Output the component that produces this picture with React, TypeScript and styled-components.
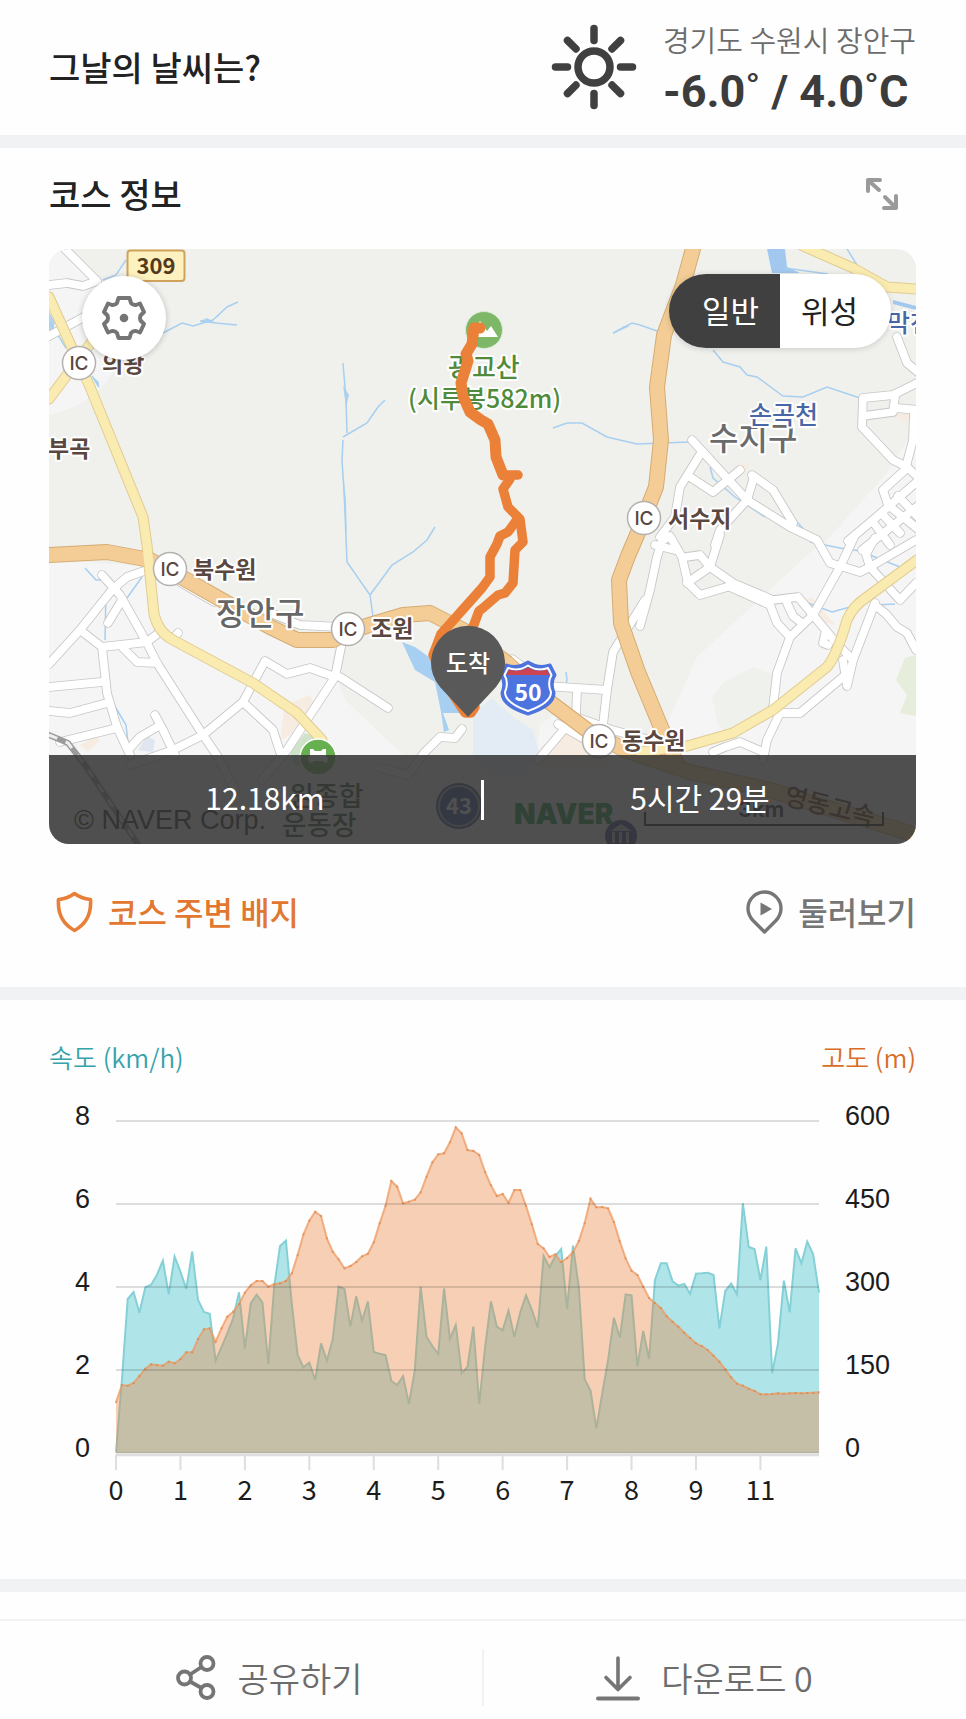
import React, { useState } from 'react';
import styled, { createGlobalStyle } from 'styled-components';

const KR = '"Noto Sans CJK KR", "Noto Sans", sans-serif';

const GlobalStyle = createGlobalStyle`
  *, *::before, *::after { box-sizing: border-box; }
  body { margin: 0; background: #fefefe; color: #222; font-family: ${KR}; }
  h1, h2, p, ul { margin: 0; padding: 0; }
  button { border: 0; background: none; padding: 0; font: inherit; color: inherit; cursor: pointer; }
`;

const Page = styled.main`
  display: flex;
  flex-direction: column;
`;

const Band = styled.div`
  height: 13px;
  background: #f1f2f4;
`;

const Title = styled.h2`
  font-size: 34px;
  line-height: 50px;
  font-weight: 500;
`;

/* weather */
const WeatherBar = styled.header`
  display: flex;
  align-items: center;
  justify-content: space-between;
  padding: 14px 50px 15px 49px;
`;
const Weather = styled.div`
  display: flex;
  align-items: center;
  gap: 26px;
`;
const Region = styled.p`
  font-size: 29px;
  line-height: 50px;
  font-weight: 350;
  color: #6c6c6c;
`;
const Temperature = styled.p`
  font-family: Roboto, sans-serif;
  font-size: 45px;
  line-height: 56px;
  font-weight: 700;
  color: #3c3c3c;
  white-space: nowrap;
`;

/* course */
const Course = styled.section`
  padding: 0 50px 0 49px;
`;
const CourseHead = styled.div`
  display: flex;
  align-items: center;
  justify-content: space-between;
  padding: 21px 17px 30px 0;
`;
const IconButton = styled.button`
  display: flex;
`;
const MapCard = styled.div`
  position: relative;
  height: 595px;
  border-radius: 20px;
  overflow: hidden;
  background: #f0f1ed;
`;
const MapDrawing = styled.svg`
  display: block;
  width: 100%;
  height: 100%;
`;
const SettingsButton = styled.button`
  position: absolute;
  left: 33px;
  top: 27px;
  display: grid;
  place-items: center;
  width: 84px;
  height: 84px;
  border-radius: 50%;
  background: #fff;
  box-shadow: 0 1px 6px rgba(0, 0, 0, 0.22);
`;
const LayerToggle = styled.div`
  position: absolute;
  right: 25px;
  top: 25px;
  display: flex;
  height: 74px;
  border-radius: 37px;
  overflow: hidden;
  box-shadow: 0 1px 6px rgba(0, 0, 0, 0.16);
`;
const LayerButton = styled.button<{ $on: boolean; $first?: boolean }>`
  width: 111px;
  padding: ${(p) => (p.$first ? '0 0 2px 12px' : '0 12px 2px 0')};
  font-size: 31px;
  line-height: 44px;
  font-weight: 400;
  color: ${(p) => (p.$on ? '#fff' : '#222')};
  background: ${(p) => (p.$on ? '#404040' : '#fff')};
`;
const Summary = styled.div`
  position: absolute;
  inset: auto 0 0;
  display: flex;
  align-items: center;
  height: 89px;
  background: rgba(54, 54, 54, 0.87);
  color: #fff;
  font-size: 30px;
  line-height: 44px;
`;
const SummaryItem = styled.span`
  flex: 1;
  padding-bottom: 5px;
  text-align: center;
`;
const SummaryRule = styled.span`
  width: 3px;
  height: 40px;
  background: #fff;
`;
const CourseLinks = styled.div`
  display: flex;
  justify-content: space-between;
  align-items: center;
  padding: 45px 0 53px;
`;
const CourseLink = styled.a<{ $accent?: boolean }>`
  display: flex;
  align-items: center;
  gap: 15px;
  padding-left: ${(p) => (p.$accent ? '7px' : '0')};
  font-size: 32px;
  line-height: 45px;
  font-weight: 500;
  text-decoration: none;
  color: ${(p) => (p.$accent ? '#e2772f' : '#767676')};
`;

/* chart */
const ChartSection = styled.section`
  padding: 38px 50px 75px 49px;
`;
const Legend = styled.div`
  display: flex;
  justify-content: space-between;
  margin-bottom: 24px;
`;
const LegendLabel = styled.span<{ $tone: string }>`
  font-size: 26px;
  line-height: 38px;
  font-weight: 350;
  color: ${(p) => p.$tone};
`;
const ChartGrid = styled.div`
  display: grid;
  grid-template-columns: 41px 1fr 71px;
  column-gap: 26px;
`;
const Axis = styled.ul<{ $right?: boolean }>`
  display: flex;
  flex-direction: column;
  justify-content: space-between;
  height: 364px;
  list-style: none;
  text-align: ${(p) => (p.$right ? 'left' : 'right')};
  font-family: "Liberation Sans", sans-serif;
  font-size: 27px;
  line-height: 32px;
  color: #1c1c1c;
`;
const PlotColumn = styled.div`
  min-width: 0;
  padding-top: 20px;
`;
const Plot = styled.svg`
  display: block;
  width: 100%;
  height: 350px;
  overflow: visible;
`;
const Distances = styled.ul`
  display: flex;
  width: 100%;
  margin-left: calc(-100% * 11 / 240);
  padding-top: 4px;
  list-style: none;
`;
const Distance = styled.li`
  flex: 0 0 calc(100% * 11 / 120);
  text-align: center;
  font-size: 27px;
  line-height: 30px;
  color: #1c1c1c;
`;

/* footer */
const Footer = styled.footer`
  display: flex;
  margin-top: 27px;
  padding: 28px 49px 14px;
  border-top: 2px solid #f1f2f4;
`;
const Action = styled.button`
  flex: 1;
  display: flex;
  align-items: center;
  justify-content: center;
  gap: 21px;
  height: 57px;
  padding-left: 8px;
  font-size: 34px;
  line-height: 48px;
  font-weight: 350;
  color: #6c6c6c;
  & + & { border-left: 2px solid #f1f2f4; }
`;

const SunIcon = () => (
  <svg width="86" height="86" viewBox="-43 -43 86 86" fill="none" stroke="#404040" strokeWidth="7.5" strokeLinecap="round" aria-hidden="true">
    <circle r="16" />
    {[0, 45, 90, 135, 180, 225, 270, 315].map((a) => (
      <path key={a} d={a % 90 ? 'M0-25.500V-37.500' : 'M0-26.500V-38.500'} transform={`rotate(${a})`} />
    ))}
  </svg>
);
const ExpandIcon = () => (
  <svg width="34" height="34" viewBox="0 0 34 34" fill="none" stroke="#9a9a9a" strokeWidth="4" strokeLinecap="round" strokeLinejoin="round" aria-hidden="true">
    <path d="M3 14V3H15M4 4L14 13M20 20L30 30M31 19V31H19" />
  </svg>
);
const GearIcon = () => (
  <svg width="46" height="46" viewBox="-23 -23 46 46" fill="none" stroke="#757575" strokeWidth="4" strokeLinejoin="round" aria-hidden="true">
    <path d="M-5.500-20H5.500L7-15Q9-12.500 12-13L16-14.500L20-6L16.500-2.500Q15.500 0 16.500 2.500L20 6L16 14.500L12 13Q9 12.500 7 15L5.500 20H-5.500L-7 15Q-9 12.500-12 13L-16 14.500L-20 6L-16.500 2.500Q-15.500 0-16.500-2.500L-20-6L-16-14.500L-12-13Q-9-12.500-7-15Z" />
    <circle r="4.300" fill="#757575" stroke="none" />
  </svg>
);
const ShieldIcon = () => (
  <svg width="37" height="42" viewBox="0 0 37 42" fill="none" stroke="#e87f38" strokeWidth="3.600" strokeLinejoin="round" aria-hidden="true">
    <path d="M18.500 2.500Q25 7.500 34.500 8.500Q36 30 18.500 39.500Q1 30 2.500 8.500Q12 7.500 18.500 2.500Z" />
  </svg>
);
const PlayPinIcon = () => (
  <svg width="37" height="44" viewBox="0 0 37 44" fill="none" stroke="#767676" strokeWidth="3.400" strokeLinejoin="round" aria-hidden="true">
    <path d="M18.500 42L7 30.500Q2 25 2 18.500A16.500 16.500 0 0 1 35 18.500Q35 25 30 30.500Z" />
    <path d="M14.500 12.500L26 19L14.500 25.500Z" fill="#767676" stroke="none" />
  </svg>
);
const ShareIcon = () => (
  <svg width="40" height="45" viewBox="0 0 40 45" fill="none" stroke="#757575" strokeWidth="3.800" aria-hidden="true">
    <circle cx="31" cy="8.500" r="6.500" />
    <circle cx="8.500" cy="23" r="6.500" />
    <circle cx="31" cy="36.500" r="6.500" />
    <path d="M14 19.500L25.500 12M14 26.500L25.500 33" />
  </svg>
);
const DownloadIcon = () => (
  <svg width="44" height="46" viewBox="0 0 44 46" fill="none" stroke="#757575" strokeWidth="3.600" strokeLinecap="round" strokeLinejoin="round" aria-hidden="true">
    <path d="M22 3V34M10 22.500L22 34.500L34 22.500" />
    <path d="M2 43.500H42" strokeWidth="4" />
  </svg>
);

/* Depth below the top of the plot for each sample; the baseline is 1057 and the top line 63. */
const BASE = 1057;
const STEP = 17.55;
const ELEVATION = [
  907, 855, 857, 849, 828, 806, 793, 795, 797, 785, 790, 777, 757, 757, 717, 688, 685, 725, 685, 650,
  635, 612, 578, 556, 543, 543, 560, 553, 550, 543, 520, 465, 403, 362, 335, 348, 415, 455, 478, 505,
  498, 486, 469, 461, 427, 370, 318, 243, 260, 310, 305, 299, 277, 230, 187, 163, 160, 127, 82, 100,
  150, 153, 165, 216, 256, 288, 282, 308, 270, 270, 318, 373, 432, 445, 471, 463, 486, 474, 457, 423,
  369, 296, 322, 321, 325, 366, 424, 475, 512, 525, 560, 594, 609, 624, 649, 665, 680, 698, 714, 730,
  738, 750, 767, 785, 808, 832, 851, 857, 866, 873, 883, 883, 882, 880, 881, 880, 879, 880, 879, 878, 877,
];
const SPEED = [
  1057, 842, 597, 576, 638, 562, 554, 524, 482, 583, 470, 515, 567, 455, 600, 636, 641, 782, 742, 700,
  655, 577, 746, 610, 584, 608, 792, 560, 438, 422, 610, 765, 802, 788, 840, 730, 782, 717, 560, 567,
  680, 589, 662, 605, 756, 761, 765, 843, 855, 828, 912, 812, 560, 710, 738, 762, 565, 717, 675, 820,
  801, 680, 912, 742, 604, 680, 691, 632, 711, 637, 586, 630, 683, 468, 502, 468, 447, 626, 437, 562,
  838, 872, 985, 880, 780, 653, 713, 583, 586, 800, 693, 777, 540, 490, 490, 544, 557, 552, 582, 521,
  520, 518, 525, 685, 573, 551, 583, 310, 441, 447, 540, 440, 820, 730, 542, 637, 445, 490, 425, 463, 578,
];
const line = (v: number[]) => v.map((y, i) => `${i ? 'L' : 'M'}${(i * STEP).toFixed(1)} ${y}`).join('');
const area = (v: number[]) => `${line(v)}V${BASE}H0Z`;
const WIDTH = STEP * 120;

const Chart = () => (
  <Plot viewBox={`0 60 ${WIDTH} 1050`} preserveAspectRatio="none" role="img" aria-label="속도와 고도">
    <path d={area(SPEED)} fill="#afe5e9" />
    <path d={line(SPEED)} fill="none" stroke="#85d0d6" strokeWidth="2" vectorEffect="non-scaling-stroke" />
    <path d={area(ELEVATION)} fill="#eb8037" fillOpacity="0.37" />
    <path d={line(ELEVATION)} fill="none" stroke="#ee9a62" strokeWidth="2" strokeOpacity="0.75" vectorEffect="non-scaling-stroke" />
    <path d={ELEVATION.map((y, i) => `M${(i * STEP - 3).toFixed(1)} ${y}h6`).join('')} fill="none" stroke="#cf7434" strokeWidth="2" strokeOpacity="0.45" vectorEffect="non-scaling-stroke" />
    <path d={[63, 312, 561, 810].map((y) => `M0 ${y}H${WIDTH}`).join('')} stroke="#000" strokeOpacity="0.13" strokeWidth="2" vectorEffect="non-scaling-stroke" />
    <path d={`M0 1057H${WIDTH}`} stroke="#aaa791" strokeWidth="1" vectorEffect="non-scaling-stroke" />
    <path d={`M0 1064H${WIDTH}`} stroke="#dedede" strokeWidth="3" vectorEffect="non-scaling-stroke" />
    <path d={Array.from({ length: 11 }, (_, k) => `M${k * 11 * STEP} 1064V1110`).join('')} stroke="#dedede" strokeWidth="2" vectorEffect="non-scaling-stroke" />
  </Plot>
);

const STREETS = [
  'M65 249L97 281L83 286L67 283L49 285', 'M49 336L84 317',
  'M49 664L80 630L112 590L127 577L147 570', 'M102 575L120 595L147 643L157 663L203 735L218 757L235 790',
  'M122 600L108 623', 'M80 630L102 647L107 693L117 727L130 755', 'M102 647L147 642L160 632',
  'M123 648L137 662L157 663', 'M49 687L102 682', 'M49 711L70 713L107 703', 'M60 742L117 728',
  'M155 715L163 730L175 755', 'M128 750L140 737L157 727', 'M130 765L173 750L203 735L243 702L265 661L287 674L310 668L335 677',
  'M243 702L273 730L280 752', 'M335 677L287 750L262 780', 'M335 677L343 637', 'M340 677L388 708', 'M178 633L176 635',
  'M462 729L455 738L440 737L424 753L408 775L380 768', 'M180 582L214 602', 'M268 612L300 625L340 627',
  'M512 659L530 672', 'M545 686L607 690', 'M577 690L576 715', 'M645 600L613 652L607 690L603 725', 'M570 715L612 730L650 740',
  'M566 727L538 760', 'M558 724L590 742',
  'M640 626L650 590L657 557L662 541L670 536L682 557L688 583L700 595L727 587',
  'M686 557L700 555L710 567L733 583L773 600L798 597L813 615L838 645L853 660', 'M720 535L710 567L687 583',
  'M730 587L770 605L777 623L790 637L777 673L773 708', 'M790 637L813 615L840 567L855 535', 'M787 603L793 616L803 624',
  'M790 527L817 540L830 563L860 572L870 567L916 540', 'M870 567L866 554L875 538', 'M870 567L900 600L916 583',
  'M875 603L853 660L847 686L843 660', 'M876 606L886 614L897 627L907 633L916 650', 'M825 634L823 643L828 645',
  'M843 677L800 713L780 713L767 740L763 760', 'M713 752L725 747L740 742L763 752',
  'M692 440L747 500L790 527', 'M701 453L680 487L675 517L660 537', 'M690 477L713 492L740 470', 'M747 500L720 530L715 545',
  'M752 475L773 490L793 523', 'M754 477L747 500', 'M655 545L675 550',
  'M897 337L907 363L919 373', 'M919 382L893 395L863 398L862 427L893 460L907 467L919 478', 'M863 416L893 412L895 397',
  'M895 408L919 410', 'M914 412L913 440L905 470L883 490L888 505L919 530', 'M848 541L873 520L919 480',
  'M862 550L919 505', 'M873 522L890 545', 'M898 496L919 518', 'M884 516L900 533',
];
const HIGHWAYS = [
  'M694 245L683 285L664 335L657 387L661 440L656 487L637 535L628 556L619 580L621 623L638 672L660 725L676 762',
  'M49 555L107 552L150 560L183 578L227 603L270 627L297 640L333 640L363 627L403 615L430 613L463 630L507 663L547 700L587 730L625 750L690 772L770 790L916 835',
];
const AVENUES = [
  'M49 297L73 350L90 387L143 517L147 545L150 575L154 614Q158 632 173 640L253 683L297 713L322 740',
  'M97 335L49 399', 'M803 246L853 268L887 287L917 289',
  'M640 752L687 746L733 733L773 710L827 667Q837 655 847 620Q853 606 867 597L917 560',
];
const STREAMS = [
  'M103 280L116 275L126 260', 'M163 333L182 323L193 326L213 320L227 307L238 302', 'M200 321L216 323L237 325',
  'M343 363L346 400L347 433M343 440L342 460L344 490L347 562L370 595L373 617', 'M343 437L367 423L378 407L385 400',
  'M370 595L392 565L413 552L427 540L435 527', 'M553 428L567 423L582 423L607 437L637 444L690 442',
  'M613 333L632 323L640 325L657 331', 'M713 350L723 362L740 367L747 375L757 377L783 396L803 397L827 387L860 398',
  'M785 268L828 274M847 249L857 265', 'M710 467L713 478L735 497L765 517M795 520L812 538',
  'M810 542L840 548L860 551L900 567', 'M805 602L832 612L850 607M875 605L895 604', 'M85 568L96 580L106 580M106 590L105 640',
  'M142 577L127 598', 'M113 703L126 725L128 743', 'M92 376L99 387', 'M566 672L567 680L565 688', 'M743 747L760 751',
  'M49 322L58 335L66 348',
];
const JUNCTIONS = [[79, 363], [170, 569], [348, 629], [644, 518], [599, 741]];
type Place = { t: string; x: number; y: number; s: number; c: string; w?: number };
const PLACES: Place[] = [
  { t: '의왕', x: 102, y: 372, s: 23, c: '#5a4740' },
  { t: '부곡', x: 48, y: 457, s: 23, c: '#5a4740' },
  { t: '북수원', x: 193, y: 578, s: 23, c: '#5a4740' },
  { t: '조원', x: 371, y: 637, s: 23, c: '#5a4740' },
  { t: '서수지', x: 668, y: 527, s: 23, c: '#5a4740' },
  { t: '동수원', x: 622, y: 749, s: 23, c: '#5a4740' },
  { t: '장안구', x: 216, y: 625, s: 32, c: '#666', w: 500 },
  { t: '수지구', x: 709, y: 450, s: 32, c: '#6b6b6b', w: 500 },
  { t: '손곡천', x: 749, y: 424, s: 25, c: '#4867a6', w: 500 },
  { t: '막천', x: 887, y: 332, s: 25, c: '#4867a6', w: 500 },
  { t: '광교산', x: 448, y: 377, s: 26, c: '#4f8b3b', w: 500 },
  { t: '(시루봉582m)', x: 408, y: 408, s: 25, c: '#4f8b3b', w: 500 },
];

const CourseMap = () => (
  <MapDrawing viewBox="49 249 867 595" preserveAspectRatio="xMidYMid slice" role="img" aria-label="광교산 코스 지도">
    <rect x="-400" y="249" width="1800" height="595" fill="#f0f1ed" />
    <g fill="#f5f5f5">
      <path d="M49 249H70Q125 290 122 345Q112 400 49 415Z" />
      <path d="M49 560L150 566L297 645L335 645L332 665L345 700L403 755L410 844H49Z" />
      <path d="M916 427L887 473L827 540L813 550L773 587L697 657L670 717L660 760L640 844H916Z" />
      <path d="M540 725L566 705L620 755V844H530Z" />
    </g>
    <path d="M712 697L723 683L753 667Q775 672 780 685L772 710L730 738L718 725Z" fill="#eff1ec" />
    <path d="M916 655L905 658L896 680L907 695L900 713L916 716Z" fill="#e6eedb" />
    <g fill="#f7ece2">
      <path d="M285 705L310 695L315 705L290 735L280 740Z" /><path d="M80 745L95 736L100 740L88 752Z" />
      <path d="M540 748L565 730L600 752L610 770H540Z" /><path d="M800 600L813 598L835 625L815 620Z" /><path d="M735 465L750 462L745 475Z" />
      <path d="M893 415L910 412L908 424Z" />
    </g>
    <path d="M290 752L305 733L322 740L310 765H295Z" fill="#cfe3c8" />
    <path d="M138 750L147 736L155 740L153 752Z" fill="#dfe6f0" />
    <path d="M473 755V713L492 698L513 717L533 730L540 755L520 775H490Z" fill="#e3ebf4" />
    <path d="M402 642L415 647L433 660L463 700V713H443L449 730L444 732L441 712L438 697L435 682L415 670Z" fill="#a6cff2" />
    <path d="M767 249H785L787 267L800 273H772ZM893 300L916 306V310L893 304Z" fill="#a3c8ef" />
    <path d="M343 385L349 395L346 407ZM342 465L346 500L347 540L344 500ZM200 321L207 318L216 323ZM92 376L99 382L99 388ZM613 334L624 326L630 326ZM49 312L55 322L53 332L49 330Z" fill="#b0d3f0" />
    <g fill="none" stroke="#a8cff0" strokeWidth="1.500">{STREAMS.map((d) => <path key={d} d={d} />)}</g>
    <g fill="none" strokeLinejoin="round" strokeLinecap="round">
      <g stroke="#c6c6c6" strokeWidth="9.500">{STREETS.map((d) => <path key={d} d={d} />)}</g>
      <g stroke="#fff" strokeWidth="7.800">{STREETS.map((d) => <path key={d} d={d} />)}</g>
      <g stroke="#e0cc93" strokeWidth="11">{AVENUES.map((d) => <path key={d} d={d} />)}</g>
      <g stroke="#d6ab72" strokeWidth="16">{HIGHWAYS.map((d) => <path key={d} d={d} />)}</g>
      <g stroke="#f3cd95" strokeWidth="14">{HIGHWAYS.map((d) => <path key={d} d={d} />)}</g>
      <g stroke="#faebb1" strokeWidth="9">{AVENUES.map((d) => <path key={d} d={d} />)}</g>
      <path d="M49 735L68 743L85 765L145 855" stroke="#9b9b9b" strokeWidth="6" />
      <path d="M49 735L68 743L85 765L145 855" stroke="#eee" strokeWidth="3" strokeDasharray="9 9" strokeLinecap="butt" />
    </g>
    <g fontFamily='"Noto Sans CJK KR", sans-serif' fill="#5a4740" stroke="#fff" strokeWidth="4" strokeLinejoin="round" paintOrder="stroke">
      {PLACES.map((p) => (
        <text key={p.t} x={p.x} y={p.y} fontSize={p.s} fontWeight={p.w ?? 700} fill={p.c}>{p.t}</text>
      ))}
    </g>
    <g fontFamily='"Noto Sans CJK KR", sans-serif' fontWeight="500">
      <text x="289" y="806" fontSize="27" fill="#2c4a26">원종합</text>
      <text x="282" y="835" fontSize="27" fill="#2c4a26">운동장</text>
      <text transform="translate(783 804) rotate(14)" fontSize="25" fill="#5a3010">영동고속</text>
    </g>
    {JUNCTIONS.map(([x, y]) => (
      <g key={x}>
        <circle cx={x} cy={y} r="16.500" fill="#fff" stroke="#b5b1af" strokeWidth="1.500" />
        <text x={x} y={y + 7} textAnchor="middle" fontFamily="Inter, sans-serif" fontSize="19" fontWeight="500" fill="#5a4740">IC</text>
      </g>
    ))}
    <rect x="127.500" y="250.500" width="57" height="30.500" rx="3" fill="#fcf1bf" stroke="#cfa35c" strokeWidth="2" />
    <text x="156" y="274" textAnchor="middle" fontFamily='"Noto Sans CJK KR", sans-serif' fontSize="22" fontWeight="700" fill="#54391a">309</text>
    <circle cx="318" cy="757" r="18" fill="#66b04f" stroke="#fff" strokeWidth="1.500" />
    <path d="M310 756V749H313L315 751H321L323 749H326V756Q330 759 326 763L321 761H315L310 763Q306 759 310 756Z" fill="#fff" />
    <circle cx="459" cy="806" r="20" fill="#2b4590" stroke="#aaa" strokeWidth="2" />
    <circle cx="459" cy="806" r="22" fill="none" stroke="#2b4590" strokeWidth="2" />
    <text x="459" y="814" textAnchor="middle" fontFamily='"Noto Sans CJK KR", sans-serif' fontSize="22" fontWeight="700" fill="#fff">43</text>
    <circle cx="621" cy="836" r="16" fill="#303c80" />
    <path d="M610 831L621 824L632 831ZM612 832H615V843H612ZM619 832H622V843H619ZM626 832H629V843H626Z" fill="#bbb" />
    <text x="74" y="829" fontFamily='"Liberation Sans", sans-serif' fontSize="27" fill="#222">© NAVER Corp.</text>
    <text x="514" y="824" fontFamily="Inter, sans-serif" fontSize="28" fontWeight="900" fill="#0c8a38">NAVER</text>
    <path d="M645 812V825H883V812" fill="none" stroke="#111" strokeWidth="2" />
    <text x="738" y="817" fontFamily="Inter, sans-serif" fontSize="22" fontWeight="600" fill="#222">3km</text>

    <g strokeLinejoin="round">
      <path d="M506 665Q517 669 528 662Q539 669 550 665L555 675Q550 683 554 693Q554 706 528 714Q502 706 502 693Q506 683 501 675Z" fill="#4d74de" stroke="#4d74de" strokeWidth="3" />
      <path d="M508 668Q518 672 528 665.500Q538 672 548 668L551.500 675Q547 683 551 692Q551 703 528 711Q505 703 505 692Q509 683 504.500 675Z" fill="#4d74de" stroke="#fff" strokeWidth="2" />
      <path d="M509 669.500Q519 673 528 667.500Q537 673 547 669.500L549.500 675H506.500Z" fill="#cd4450" />
    </g>
    <text x="528" y="701" textAnchor="middle" fontFamily='"Noto Sans CJK KR", sans-serif' fontSize="23" fontWeight="700" fill="#fff">50</text>

    <circle cx="484" cy="330" r="18.500" fill="#7fb768" stroke="#d9ebd2" strokeWidth="1" />
    <path d="M469 337L480 321L487 331L491 326L498 337Z" fill="#fff" />
    <g fill="none" stroke="#eb8038" strokeWidth="9.500" strokeLinejoin="round" strokeLinecap="round">
      <path strokeWidth="11" d="M480 328L474 328L472 344L466 354L468 361L464 374L461 383L463 396L470 412L481 420L488 424L495 440L496 457L503 475" />
      <path d="M503 475H518" />
      <path d="M503 475L510 479L503 489L508 507L520 519L523 542L515 550L513 583L505 593L498 595L483 608L479 611L473 627L470 660" />
      <path d="M516 521L508 532L500 536L497 544L490 557L490 577L482 588L441 634L433 655L450 690L465 713L471 713L475 707" />
    </g>
    <path d="M468 717L440 687A37 37 0 1 1 496 687Z" fill="#595959" />
    <text x="468" y="672" textAnchor="middle" fontFamily='"Noto Sans CJK KR", sans-serif' fontSize="24" fontWeight="500" fill="#fff">도착</text>
  </MapDrawing>
);

export default function App() {
  const [layer, setLayer] = useState<'map' | 'satellite'>('map');
  return (
    <Page>
      <GlobalStyle />
      <WeatherBar>
        <Title>그날의 날씨는?</Title>
        <Weather>
          <SunIcon />
          <div>
            <Region>경기도 수원시 장안구</Region>
            <Temperature>-6.0˚ / 4.0˚C</Temperature>
          </div>
        </Weather>
      </WeatherBar>
      <Band />
      <Course>
        <CourseHead>
          <Title>코스 정보</Title>
          <IconButton aria-label="지도 확대"><ExpandIcon /></IconButton>
        </CourseHead>
        <MapCard>
          <CourseMap />
          <SettingsButton aria-label="지도 설정"><GearIcon /></SettingsButton>
          <LayerToggle>
            <LayerButton $first $on={layer === 'map'} onClick={() => setLayer('map')}>일반</LayerButton>
            <LayerButton $on={layer === 'satellite'} onClick={() => setLayer('satellite')}>위성</LayerButton>
          </LayerToggle>
          <Summary>
            <SummaryItem>12.18km</SummaryItem>
            <SummaryRule />
            <SummaryItem>5시간 29분</SummaryItem>
          </Summary>
        </MapCard>
        <CourseLinks>
          <CourseLink href="#badges" $accent><ShieldIcon />코스 주변 배지</CourseLink>
          <CourseLink href="#tour"><PlayPinIcon />둘러보기</CourseLink>
        </CourseLinks>
      </Course>
      <Band />
      <ChartSection>
        <Legend>
          <LegendLabel $tone="#35a3ab">속도 (km/h)</LegendLabel>
          <LegendLabel $tone="#d96c26">고도 (m)</LegendLabel>
        </Legend>
        <ChartGrid>
          <Axis>{[8, 6, 4, 2, 0].map((n) => <li key={n}>{n}</li>)}</Axis>
          <PlotColumn>
            <Chart />
            <Distances>{[0, 1, 2, 3, 4, 5, 6, 7, 8, 9, 11].map((n) => <Distance key={n}>{n}</Distance>)}</Distances>
          </PlotColumn>
          <Axis $right>{[600, 450, 300, 150, 0].map((n) => <li key={n}>{n}</li>)}</Axis>
        </ChartGrid>
      </ChartSection>
      <Band />
      <Footer>
        <Action><ShareIcon />공유하기</Action>
        <Action><DownloadIcon />다운로드 0</Action>
      </Footer>
    </Page>
  );
}
